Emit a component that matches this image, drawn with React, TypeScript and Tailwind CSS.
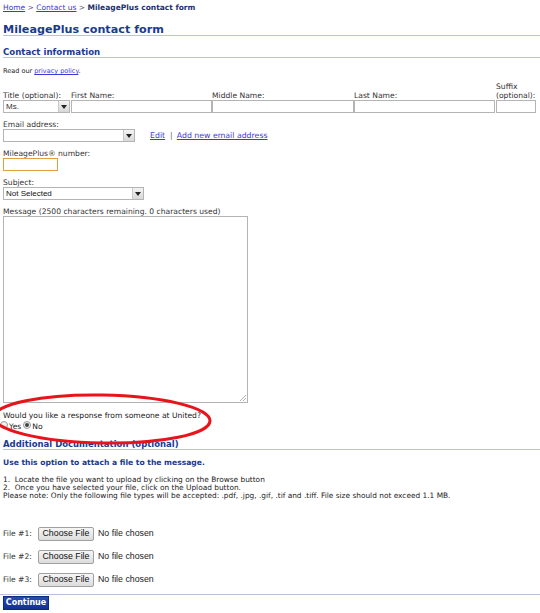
import React from "react";

const Caret = () => (
  <span className="flex h-full w-[11px] items-center justify-center border-l border-[#c8c8c8] bg-gradient-to-b from-[#f4f4f4] to-[#d8d8d8]">
    <svg width="6" height="4" viewBox="0 0 6 4"><path d="M0 0h6L3 4z" fill="#222" /></svg>
  </span>
);

const FileRow = ({ n }: { n: number }) => (
  <div className="flex items-center h-[14px]">
    <span className="w-[35px] text-[7.6px] text-[#333]">File #{n}:</span>
    <span className="flex h-[14px] w-[56px] items-center justify-center rounded-[2px] border border-[#a0a0a0] bg-gradient-to-b from-[#f6f6f6] to-[#dcdcdc] text-[8.8px] text-[#111] font-['Liberation_Sans',sans-serif]">Choose File</span>
    <span className="ml-[4px] text-[8.8px] text-[#222] font-['Liberation_Sans',sans-serif]">No file chosen</span>
  </div>
);

export default function App() {
  return (
    <div className="relative w-[540px] h-[613px] overflow-hidden bg-white font-['DejaVu_Sans',Verdana,sans-serif] text-[#333]">
      <div className="pl-[3px] pt-[3px]">
        <div className="text-[7.5px] font-bold text-[#1a2f6e] leading-[9px]">
          <span className="underline text-[#3a3ad8] font-normal">Home</span>
          <span className="text-[#666] font-normal"> &gt; </span>
          <span className="underline text-[#3a3ad8] font-normal">Contact us</span>
          <span className="text-[#666] font-normal"> &gt; </span>
          MileagePlus contact form
        </div>
        <div className="mt-[12px] border-b border-[#b9c3dc]">
          <div className="text-[11.2px] leading-[11px] font-bold text-[#1a3a8f]">MileagePlus contact form</div>
        </div>
        <div className="mt-[11px] border-b border-[#b9c3dc]">
          <div className="text-[8.6px] leading-[10px] font-bold text-[#1a3a8f]">Contact information</div>
        </div>
        <div className="mt-[9px] text-[6.5px] leading-[8px] text-[#222]">
          Read our <span className="underline text-[#3a3ad8]">privacy policy</span>.
        </div>

        <div className="mt-[7px] flex items-end text-[7.6px] leading-[9px] text-[#333]">
          <div className="w-[68px]">
            <div>Title (optional):</div>
            <div className="flex h-[13px] w-[67px] items-center justify-between border border-[#b4b4b4] bg-white pl-[2px] text-[8px]">
              <span className="font-['Liberation_Sans',sans-serif]">Ms.</span>
              <Caret />
            </div>
          </div>
          <div className="w-[141px]">
            <div>First Name:</div>
            <div className="h-[13px] w-[141px] border border-[#b4b4b4]" />
          </div>
          <div className="w-[142px]">
            <div>Middle Name:</div>
            <div className="h-[13px] w-[142px] border border-[#b4b4b4]" />
          </div>
          <div className="w-[142px]">
            <div>Last Name:</div>
            <div className="h-[13px] w-[141px] border border-[#b4b4b4]" />
          </div>
          <div className="w-[41px]">
            <div>Suffix<br />(optional):</div>
            <div className="h-[13px] w-[40px] border border-[#b4b4b4]" />
          </div>
        </div>

        <div className="mt-[8px] text-[7.6px] leading-[8px]">Email address:</div>
        <div className="flex items-center">
          <div className="flex h-[13px] w-[132px] justify-end border border-[#b4b4b4]">
            <Caret />
          </div>
          <span className="ml-[15px] text-[7.8px] underline text-[#3a3ad8]">Edit</span>
          <span className="ml-[5px] text-[7.8px] text-[#666]">|</span>
          <span className="ml-[4px] text-[7.8px] underline text-[#3a3ad8]">Add new email address</span>
        </div>

        <div className="mt-[8px] text-[7.6px] leading-[8px]">MileagePlus® number:</div>
        <div className="h-[13px] w-[55px] border border-[#e0a040]" />

        <div className="mt-[8px] text-[7.6px] leading-[8px]">Subject:</div>
        <div className="flex h-[13px] w-[141px] items-center justify-between border border-[#b4b4b4] pl-[2px]">
          <span className="text-[8px] text-[#111] font-['Liberation_Sans',sans-serif]">Not Selected</span>
          <Caret />
        </div>

        <div className="mt-[8px] text-[7.6px] leading-[8px]">Message (2500 characters remaining. 0 characters used)</div>
        <div className="relative h-[187px] w-[245px] border border-[#b4b4b4]">
          <svg className="absolute right-[1px] bottom-[1px]" width="6" height="6" viewBox="0 0 6 6">
            <path d="M6 0L0 6M6 3L3 6" stroke="#999" strokeWidth="0.8" />
          </svg>
        </div>

        <div className="mt-[9px] text-[7.6px] leading-[8px] text-[#222]">Would you like a response from someone at United?</div>
        <div className="flex h-[10px] items-center text-[7.6px] leading-[8px] text-[#222]">
          <span className="ml-[-3px] inline-block h-[8px] w-[8px] rounded-full border border-[#999] bg-[#f0f0f0]" />
          <span className="ml-[1px] mt-[3px]">Yes</span>
          <span className="ml-[2px] flex h-[8px] w-[8px] items-center justify-center rounded-full border border-[#999] bg-[#f0f0f0]">
            <span className="h-[4px] w-[4px] rounded-full bg-[#444]" />
          </span>
          <span className="ml-[1px] mt-[3px]">No</span>
        </div>

        <div className="mt-[9px] border-b border-[#b9c3dc]">
          <div className="text-[8.5px] leading-[10px] font-bold text-[#1a3a8f]">Additional Documentation (optional)</div>
        </div>

        <div className="mt-[9px] text-[7.6px] leading-[8px] font-bold text-[#1a3a8f]">Use this option to attach a file to the message.</div>
        <div className="mt-[9px] text-[7.4px] leading-[8px] text-[#222]">
          <div>1.&nbsp; Locate the file you want to upload by clicking on the Browse button</div>
          <div>2.&nbsp; Once you have selected your file, click on the Upload button.</div>
          <div>Please note: Only the following file types will be accepted: .pdf, .jpg, .gif, .tif and .tiff. File size should not exceed 1.1 MB.</div>
        </div>

        <div className="mt-[27px] flex flex-col gap-[9px]">
          <FileRow n={1} />
          <FileRow n={2} />
          <FileRow n={3} />
        </div>

        <div className="mt-[7px] ml-[-3px] border-t border-[#b9c3dc]" />
        <div className="mt-[1px] flex h-[14px] w-[46px] items-center justify-center border border-[#0e2a80] bg-gradient-to-b from-[#2a4bb8] to-[#13318f] text-[8px] font-bold text-white">
          Continue
        </div>
      </div>

      <svg className="absolute left-0 top-0 pointer-events-none" width="540" height="613">
        <ellipse cx="102" cy="419" rx="108" ry="24" transform="rotate(1 102 419)" fill="none" stroke="#e8141c" strokeWidth="3" />
      </svg>
    </div>
  );
}
